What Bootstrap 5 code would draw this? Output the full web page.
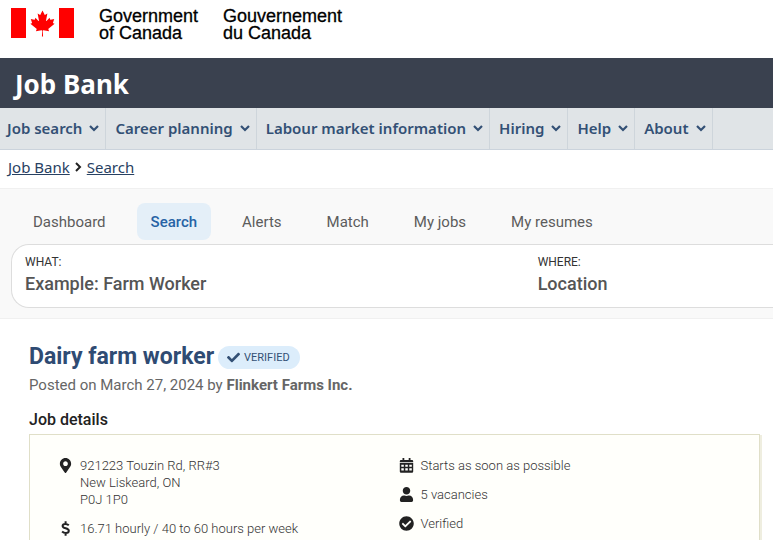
<!DOCTYPE html>
<html lang="en">
<head>
<meta charset="utf-8">
<meta name="viewport" content="width=device-width, initial-scale=1">
<title>Dairy farm worker - Job Bank</title>
<link href="https://cdn.jsdelivr.net/npm/bootstrap@5.3.0/dist/css/bootstrap.min.css" rel="stylesheet">
<style>
body{font-family:Roboto,"Liberation Sans",sans-serif;color:#333;overflow-x:hidden}
svg{display:block;flex:none}
.gov-head{height:58px;padding:8px 10px;gap:25px}
.gov-word{font:500 18px/17px "Liberation Sans",sans-serif;color:#000;-webkit-text-stroke:.3px #000}
.bank-bar{background:#3a414f;height:50px;padding:0 15px;font:700 26px/52px "Noto Sans",sans-serif}
.main-menu{background:#e0e4e7;border-bottom:1px solid #cbd3dc;font:600 15px/24px "Noto Sans",sans-serif}
.main-menu li{border-right:1px solid #ced5db}
.main-menu button{border:0;background:none;color:#335075;font-weight:600;height:41px;padding:0 6px 2px 9px;gap:7px;white-space:nowrap}
.main-menu li:first-child button{padding-left:7px}
.crumbs{font:15px/20px "Noto Sans",sans-serif;padding:7px 8px 11px;gap:5px}
.crumbs a{color:#284162}
.find{background:#f9f9f9;border-top:1px solid #f0f0f0;border-bottom:1px solid #f0f0f0;padding:14px 0 10px 11px}
.tabs{padding-left:8px;gap:17px;margin-bottom:4px}
.tabs a{color:#5c5c5c;font-size:15px;line-height:20px;padding:9px 14px 8px;border-radius:8px;text-decoration:none}
.tabs a.on{background:#e4eff8;color:#2763a5;font-weight:500}
.find-box{background:#fff;border:1px solid #ddd;border-right:0;border-radius:18px 0 0 18px;padding:9px 0 11px 13px;gap:4px}
.find-box label{display:block;font-size:12px;line-height:16px;color:#333}
.find-box input{display:block;border:0;padding:0;width:100%;font-size:18px;font-weight:500;line-height:24px;height:26px;background:none}
.find-box input::placeholder{color:#555;opacity:1}
.what{flex:0 0 68%}
.post{padding:24px 13px 0 29px}
.post h1{font-size:23px;line-height:28px;font-weight:700;color:#2f4b73}
.verified{background:#dcedfb;color:#335075;border-radius:12px;font-size:11px;line-height:23px;padding:0 10px 0 9px;gap:4px}
.posted{font-size:15px;line-height:20px;color:#666;margin-top:4px}
.post h2{font-size:16px;line-height:20px;font-weight:500;color:#222;margin:15px 0 4px}
.facts{background:#fffffb;border:1px solid #e0dfc8;box-shadow:2px 1px 0 #efeee0;padding:22px 28px;font-size:13px;font-weight:300;color:#333}
.facts li{display:flex;gap:7px;line-height:17px;margin-bottom:12px}
.facts svg{margin-top:1px;color:#222}
</style>
</head>
<body>
<header>
<div class="gov-head d-flex">
<svg width="64" height="30" viewBox="0 0 64 30" role="img" aria-label="Flag of Canada"><path fill="#f00" d="M1 0h15v30H1zM49 0h15v30H49z"/><path fill="#f00" transform="translate(1.3 -.2) scale(.0065)" d="m4890 4430-45-863a95 95 0 0 1 111-98l859 151-116-320a65 65 0 0 1 20-73l941-762-212-99a65 65 0 0 1-34-79l186-572-542 115a65 65 0 0 1-73-38l-105-247-423 454a65 65 0 0 1-111-57l204-1052-327 189a65 65 0 0 1-91-27l-332-652-332 652a65 65 0 0 1-91 27l-327-189 204 1052a65 65 0 0 1-111 57l-423-454-105 247a65 65 0 0 1-73 38l-542-115 186 572a65 65 0 0 1-34 79l-212 99 941 762a65 65 0 0 1 20 73l-116 320 859-151a95 95 0 0 1 111 98l-45 863z"/></svg>
<div class="gov-word">Government<br>of Canada</div>
<div class="gov-word">Gouvernement<br>du Canada</div>
</div>
<div class="bank-bar text-white">Job Bank</div>
<nav class="main-menu" aria-label="Main">
<ul class="list-unstyled d-flex m-0">
<li><button type="button" class="d-flex align-items-center">Job search <svg width="10" height="8" viewBox="0 0 10 8" fill="none" stroke="currentColor" stroke-width="2.200"><path d="m1 2 4 4 4-4"/></svg></button></li>
<li><button type="button" class="d-flex align-items-center">Career planning <svg width="10" height="8" viewBox="0 0 10 8" fill="none" stroke="currentColor" stroke-width="2.200"><path d="m1 2 4 4 4-4"/></svg></button></li>
<li><button type="button" class="d-flex align-items-center">Labour market information <svg width="10" height="8" viewBox="0 0 10 8" fill="none" stroke="currentColor" stroke-width="2.200"><path d="m1 2 4 4 4-4"/></svg></button></li>
<li><button type="button" class="d-flex align-items-center">Hiring <svg width="10" height="8" viewBox="0 0 10 8" fill="none" stroke="currentColor" stroke-width="2.200"><path d="m1 2 4 4 4-4"/></svg></button></li>
<li><button type="button" class="d-flex align-items-center">Help <svg width="10" height="8" viewBox="0 0 10 8" fill="none" stroke="currentColor" stroke-width="2.200"><path d="m1 2 4 4 4-4"/></svg></button></li>
<li><button type="button" class="d-flex align-items-center">About <svg width="10" height="8" viewBox="0 0 10 8" fill="none" stroke="currentColor" stroke-width="2.200"><path d="m1 2 4 4 4-4"/></svg></button></li>
</ul>
</nav>
<nav class="crumbs d-flex align-items-center" aria-label="Breadcrumb">
<a href="#">Job Bank</a>
<svg width="7" height="10" viewBox="0 0 7 10" fill="none" stroke="#222" stroke-width="2"><path d="m1 1 4 4-4 4"/></svg>
<a href="#">Search</a>
</nav>
</header>
<main>
<section class="find">
<nav class="tabs d-flex" aria-label="Account">
<a href="#">Dashboard</a><a href="#" class="on" aria-current="page">Search</a><a href="#">Alerts</a><a href="#">Match</a><a href="#">My jobs</a><a href="#">My resumes</a>
</nav>
<form class="find-box d-flex">
<div class="what"><label for="what">WHAT:</label><input id="what" type="text" placeholder="Example: Farm Worker"></div>
<div class="flex-fill"><label for="where">WHERE:</label><input id="where" type="text" placeholder="Location"></div>
</form>
</section>
<article class="post">
<div class="d-flex align-items-center gap-1">
<h1 class="m-0">Dairy farm worker</h1>
<span class="verified d-inline-flex align-items-center"><svg width="13" height="13" viewBox="0 0 512 512" fill="currentColor"><path d="M173.898 439.404l-166.400-166.400c-9.997-9.997-9.997-26.206 0-36.204l36.203-36.204c9.997-9.998 26.207-9.998 36.204 0L192 312.690 432.095 72.596c9.997-9.997 26.207-9.997 36.204 0l36.203 36.204c9.997 9.997 9.997 26.206 0 36.204l-294.400 294.401c-9.998 9.997-26.207 9.997-36.204-.001z"/></svg>VERIFIED</span>
</div>
<p class="posted mb-0">Posted on March 27, 2024 by <strong>Flinkert Farms Inc.</strong></p>
<h2>Job details</h2>
<div class="facts">
<div class="row g-0">
<ul class="list-unstyled col-6 m-0 pe-2">
<li><svg width="15" height="15" viewBox="0 0 384 512" fill="currentColor"><path fill-rule="evenodd" d="M172.268 501.670C26.970 291.031 0 269.413 0 192 0 85.961 85.961 0 192 0s192 85.961 192 192c0 77.413-26.970 99.031-172.268 309.670-9.535 13.774-29.930 13.773-39.464 0zM192 272c44.183 0 80-35.817 80-80s-35.817-80-80-80-80 35.817-80 80 35.817 80 80 80z"/></svg><span>921223 Touzin Rd, RR#3<br>New Liskeard, ON<br>P0J 1P0</span></li>
<li><svg width="15" height="15" viewBox="0 0 15 15" fill="none" stroke="currentColor" stroke-width="2"><path d="M10.800 4.300C9.800 3.400 8.600 3 7.400 3 5.800 3 4.600 3.800 4.600 5c0 3 6.200 1.600 6.200 4.800 0 1.300-1.200 2.200-3 2.200-1.400 0-2.700-.5-3.700-1.500M7.600.3v3M7.600 11.500v3.200"/></svg><span>16.71 hourly / 40 to 60 hours per week</span></li>
</ul>
<ul class="list-unstyled col-6 m-0 ps-1">
<li><svg width="15" height="15" viewBox="0 0 15 15" fill="currentColor"><path fill-rule="evenodd" d="M3.500 0h1.800v2h4.400V0h1.800v2H13q1.200 0 1.200 1.200v1H.8v-1Q.8 2 2 2h1.500zM.8 5.100h13.400v8.400q0 1.200-1.200 1.200H2q-1.200 0-1.200-1.200zM2.300 6.700v2h2.500v-2zm4 0v2h2.500v-2zm4 0v2h2.500v-2zm-8 3.600v2.300h2.500v-2.300zm4 0v2.300h2.500v-2.300zm4 0v2.300h2.500v-2.300z"/></svg><span>Starts as soon as possible</span></li>
<li><svg width="15" height="15" viewBox="0 0 448 512" fill="currentColor"><path d="M224 256c70.700 0 128-57.300 128-128S294.700 0 224 0 96 57.300 96 128s57.300 128 128 128zm89.600 32h-16.700c-22.200 10.200-46.900 16-72.900 16s-50.600-5.800-72.900-16h-16.700C60.200 288 0 348.200 0 422.400V464c0 26.500 21.500 48 48 48h352c26.500 0 48-21.500 48-48v-41.600c0-74.200-60.200-134.400-134.400-134.400z"/></svg><span>5 vacancies</span></li>
<li><svg width="15" height="15" viewBox="0 0 512 512" fill="currentColor"><path fill-rule="evenodd" d="M504 256c0 136.967-111.033 248-248 248S8 392.967 8 256 119.033 8 256 8s248 111.033 248 248zM227.314 387.314l184-184c6.248-6.248 6.248-16.379 0-22.627l-22.627-22.627c-6.248-6.249-16.379-6.249-22.628 0L216 308.118l-70.059-70.059c-6.248-6.248-16.379-6.248-22.628 0l-22.627 22.627c-6.248 6.248-6.248 16.379 0 22.627l104 104c6.249 6.249 16.379 6.249 22.628.001z"/></svg><span>Verified</span></li>
</ul>
</div>
</div>
</article>
</main>
<script src="https://cdn.jsdelivr.net/npm/bootstrap@5.3.0/dist/js/bootstrap.bundle.min.js"></script>
</body>
</html>
